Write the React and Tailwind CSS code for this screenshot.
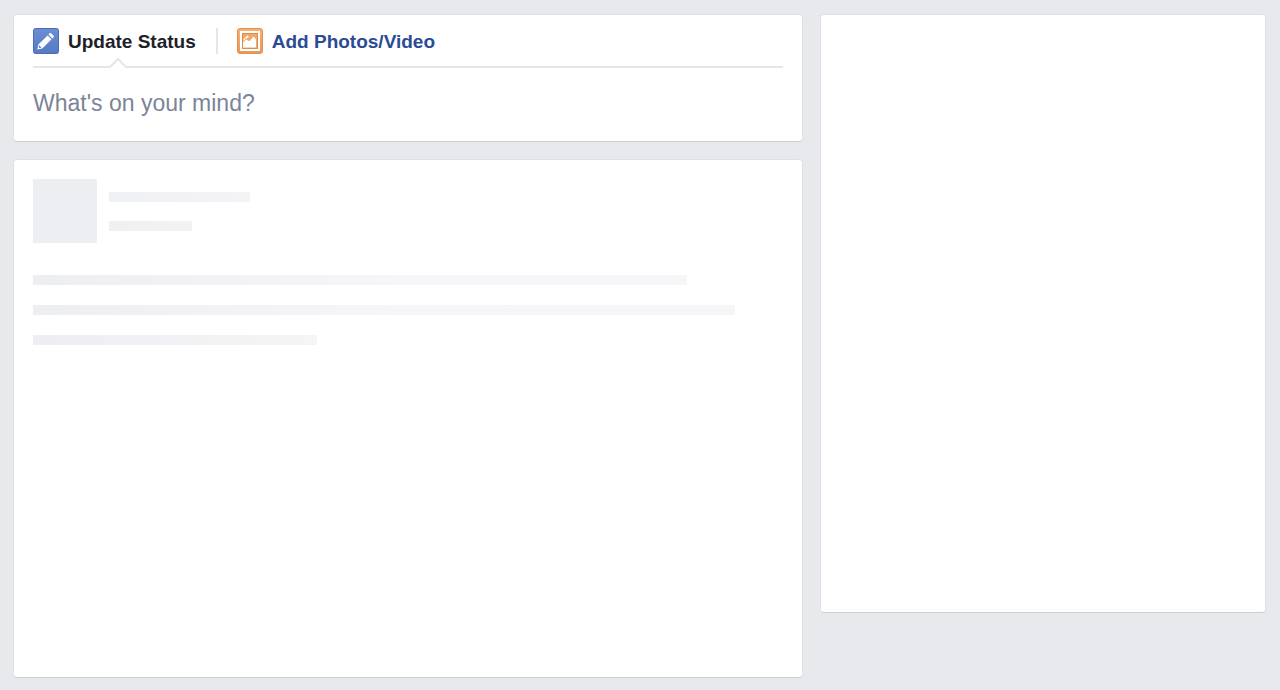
import React from "react";

function Card({ as: Tag = "section", className = "", children, ...rest }) {
  return (
    <Tag
      className={`rounded-[4px] border border-[#dfe0e4] border-b-[#cdced2] bg-white ${className}`}
      {...rest}
    >
      {children}
    </Tag>
  );
}

function PencilIcon() {
  return (
    <svg width="26" height="26" viewBox="0 0 26 26" aria-hidden="true" className="shrink-0">
      <defs>
        <linearGradient id="pencil-bg" x1="0" y1="0" x2="0" y2="1">
          <stop offset="0" stopColor="#6c8dd2" />
          <stop offset="1" stopColor="#557ac5" />
        </linearGradient>
      </defs>
      <rect x="0.5" y="0.5" width="25" height="25" rx="2" fill="url(#pencil-bg)" stroke="#4a6bb5" />
      <path
        d="M4.3 21.5 5.4 16.6 14.6 7.4 18.5 11.3 9.3 20.5ZM15.5 6.5 16.7 5.3Q17.4 4.7 18.1 5.3L20.6 7.8Q21.2 8.5 20.6 9.2L19.4 10.4Z"
        fill="#fff"
      />
      <path d="M6.2 17.3 8.6 19.7 6.5 20.1 5.7 19.3Z" fill="#5c7fc8" />
    </svg>
  );
}

function PhotoIcon() {
  return (
    <svg width="26" height="26" viewBox="0 0 26 26" aria-hidden="true" className="shrink-0">
      <defs>
        <linearGradient id="photo-bg" x1="0" y1="0" x2="0" y2="1">
          <stop offset="0" stopColor="#f9b074" />
          <stop offset="1" stopColor="#ea9856" />
        </linearGradient>
      </defs>
      <rect x="0.5" y="0.5" width="25" height="25" rx="2.5" fill="url(#photo-bg)" stroke="#e0904f" />
      <rect x="4" y="4" width="18" height="18" fill="#f3a262" stroke="#fff" strokeWidth="2" />
      <rect x="5.5" y="5.5" width="15" height="15" fill="#f4a868" stroke="#dc8c4c" />
      <path d="M6 19.5V14.5L9.2 11.6 12.4 13.2 16.6 8.6 19 11.4V19.5Z" fill="#fff" />
      <path d="M6.3 12.6V11.6L10.4 7.6 11.6 8.2 11.4 9.6 9.2 10.2 7 12.6Z" fill="#fff" />
    </svg>
  );
}

function Composer() {
  return (
    <Card as="form" aria-label="Create a post" className="px-[19px]">
      <div className="relative flex items-center border-b-2 border-[#e5e6e9] pt-[13px] pb-3 text-[19px] leading-6 font-bold">
        <button type="button" aria-pressed="true" className="flex items-center gap-[9px] text-[#1d2129]">
          <PencilIcon />
          <span className="pt-[2px]">Update Status</span>
        </button>
        <span className="mr-[19px] ml-5 h-[26px] w-[2px] bg-[#e5e6e9]" />
        <button type="button" aria-pressed="false" className="flex items-center gap-[9px] text-[#2b4b95]">
          <PhotoIcon />
          <span className="pt-[2px]">Add Photos/Video</span>
        </button>
        <svg
          width="20"
          height="11"
          viewBox="0 0 20 11"
          aria-hidden="true"
          className="absolute -bottom-[2px] left-[75px]"
        >
          <path d="M1 11 1 9 10 0 19 9V11Z" fill="#fff" />
          <path d="M0 10H2L10 2 18 10H20" fill="none" stroke="#e5e6e9" strokeWidth="2" />
        </svg>
      </div>
      <textarea
        rows={1}
        aria-label="What's on your mind?"
        placeholder="What's on your mind?"
        className="mt-5 mb-[23px] block h-[30px] w-full resize-none overflow-hidden bg-transparent text-[23px] leading-[30px] text-[#1d2129] outline-none placeholder:text-[#7b8498]"
      />
    </Card>
  );
}

function Bar({ className }) {
  return <div className={`h-[10px] ${className}`} />;
}

function PostPlaceholder() {
  return (
    <Card aria-label="Loading post" aria-busy="true" className="min-h-[519px] p-[19px]">
      <div className="flex gap-3">
        <div className="size-16 bg-[#edeef2]" />
        <div className="flex flex-col gap-[19px] pt-[13px]">
          <Bar className="w-[141px] bg-linear-to-r from-[#eff0f3] to-[#f4f4f6]" />
          <Bar className="w-[83px] bg-linear-to-r from-[#f0f0f3] to-[#f2f2f4]" />
        </div>
      </div>
      <div className="mt-8 flex flex-col gap-5">
        <Bar className="w-[87.2%] bg-linear-to-r from-[#edeef2] to-[#f6f6f8] to-[360px]" />
        <Bar className="w-[93.6%] bg-linear-to-r from-[#edeef2] to-[#f6f6f8] to-[360px]" />
        <Bar className="w-[37.9%] bg-linear-to-r from-[#edeef2] to-[#f5f5f7]" />
      </div>
    </Card>
  );
}

export default function App() {
  return (
    <div className="min-h-screen bg-[#e8e9ed] pt-[14px] pr-[14px] pb-3 pl-[13px] font-['Liberation_Sans',Arial,sans-serif]">
      <div className="grid grid-cols-[790fr_446fr] items-start gap-[17px]">
        <main className="flex min-w-0 flex-col gap-[17px]">
          <Composer />
          <PostPlaceholder />
        </main>
        <Card as="aside" aria-label="Sidebar" className="min-h-[599px]" />
      </div>
    </div>
  );
}
